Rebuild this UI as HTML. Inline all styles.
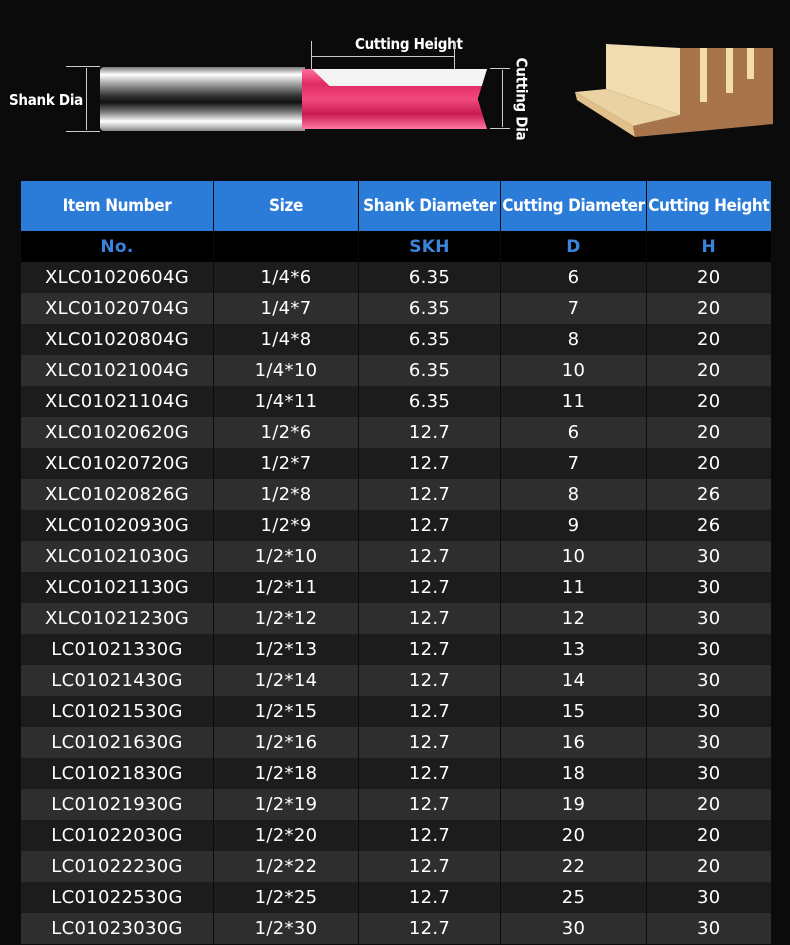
<!DOCTYPE html>
<html><head><meta charset="utf-8"><style>
body{margin:0;width:790px;height:945px;background:#0b0b0b;overflow:hidden;font-family:"Liberation Sans","DejaVu Sans",sans-serif;position:relative}
.lbl{position:absolute;color:#fff;font-size:15px;font-weight:bold;font-family:"DejaVu Sans Condensed","Liberation Sans Narrow",sans-serif;letter-spacing:-0.3px}
table{position:absolute;left:20px;top:181px;border-collapse:collapse;width:750px;table-layout:fixed}
td{text-align:center;color:#fff;font-size:18px;height:31px;padding:0;border-left:1px solid #0b0b0b;font-family:"DejaVu Sans","Liberation Sans",sans-serif;letter-spacing:0.3px;white-space:nowrap;overflow:hidden}
tr.h td{background:#2b7bd9;height:50px;font-size:17px;font-weight:bold;font-family:"DejaVu Sans Condensed","Liberation Sans",sans-serif;letter-spacing:-0.4px}
tr.s td{background:#000;color:#3a84dc;font-weight:bold;font-size:17px}
tr:nth-child(even):not(.s) td{background:#2e2e2e}
tr:nth-child(odd):not(.h) td{background:#1c1c1c}
</style></head><body>
<div class="lbl" style="left:9px;top:91px">Shank Dia</div>
<div style="position:absolute;left:66px;top:66px;width:34px;height:1px;background:#ccc"></div>
<div style="position:absolute;left:66px;top:131px;width:34px;height:1px;background:#ccc"></div>
<div style="position:absolute;left:86px;top:68px;width:1px;height:62px;background:#ccc"></div>
<div style="position:absolute;left:100px;top:67px;width:205px;height:64px;border-radius:4px 0 0 4px;background:linear-gradient(#777 0%,#fff 12%,#aaa 25%,#333 45%,#111 55%,#777 70%,#fff 85%,#888 100%)"></div>
<div style="position:absolute;left:302px;top:69px;width:185px;height:60px;background:linear-gradient(#ff6f9c 0%,#e02a62 25%,#f24a80 50%,#c81b52 75%,#ff7aa5 100%);clip-path:polygon(0 0,100% 0,95% 50%,100% 100%,0 100%)"></div>
<div style="position:absolute;left:312px;top:69px;width:175px;height:17px;background:#f4f4f4;clip-path:polygon(0 0,100% 0,97% 100%,10% 100%)"></div>
<div class="lbl" style="left:355px;top:35px">Cutting Height</div>
<div style="position:absolute;left:311px;top:41px;width:1px;height:28px;background:#ccc"></div>
<div style="position:absolute;left:454px;top:41px;width:1px;height:28px;background:#ccc"></div>
<div style="position:absolute;left:312px;top:56px;width:142px;height:1px;background:#ccc"></div>
<div style="position:absolute;left:490px;top:68px;width:20px;height:1px;background:#ccc"></div>
<div style="position:absolute;left:490px;top:128px;width:20px;height:1px;background:#ccc"></div>
<div style="position:absolute;left:502px;top:70px;width:1px;height:57px;background:#ccc"></div>
<div class="lbl" style="left:480px;top:90px;transform:rotate(90deg);transform-origin:center">Cutting Dia</div>
<svg style="position:absolute;left:0;top:0" width="790" height="150">
<polygon points="680,48 773,48 773,124 700,131 635,137 633,126 680,115" fill="#a8744c"/>
<polygon points="606,44 680,48 680,115 606,89" fill="#f0dcb0"/>
<polygon points="575,92 606,89 680,115 633,126" fill="#ead2a2"/>
<polygon points="575,92 633,126 635,137 577,100" fill="#e2c08c"/>
<rect x="700" y="48" width="7" height="54" fill="#f2dcaa"/>
<rect x="726" y="48" width="7" height="45" fill="#f2dcaa"/>
<rect x="747" y="48" width="7" height="31" fill="#f2dcaa"/>
</svg>
<table>
<colgroup><col style="width:193px"><col style="width:145px"><col style="width:142px"><col style="width:146px"><col style="width:124px"></colgroup>
<tr class="h"><td>Item Number</td><td>Size</td><td>Shank Diameter</td><td>Cutting Diameter</td><td>Cutting Height</td></tr>
<tr class="s"><td>No.</td><td></td><td>SKH</td><td>D</td><td>H</td></tr>
<tr><td>XLC01020604G</td><td>1/4*6</td><td>6.35</td><td>6</td><td>20</td></tr>
<tr><td>XLC01020704G</td><td>1/4*7</td><td>6.35</td><td>7</td><td>20</td></tr>
<tr><td>XLC01020804G</td><td>1/4*8</td><td>6.35</td><td>8</td><td>20</td></tr>
<tr><td>XLC01021004G</td><td>1/4*10</td><td>6.35</td><td>10</td><td>20</td></tr>
<tr><td>XLC01021104G</td><td>1/4*11</td><td>6.35</td><td>11</td><td>20</td></tr>
<tr><td>XLC01020620G</td><td>1/2*6</td><td>12.7</td><td>6</td><td>20</td></tr>
<tr><td>XLC01020720G</td><td>1/2*7</td><td>12.7</td><td>7</td><td>20</td></tr>
<tr><td>XLC01020826G</td><td>1/2*8</td><td>12.7</td><td>8</td><td>26</td></tr>
<tr><td>XLC01020930G</td><td>1/2*9</td><td>12.7</td><td>9</td><td>26</td></tr>
<tr><td>XLC01021030G</td><td>1/2*10</td><td>12.7</td><td>10</td><td>30</td></tr>
<tr><td>XLC01021130G</td><td>1/2*11</td><td>12.7</td><td>11</td><td>30</td></tr>
<tr><td>XLC01021230G</td><td>1/2*12</td><td>12.7</td><td>12</td><td>30</td></tr>
<tr><td>LC01021330G</td><td>1/2*13</td><td>12.7</td><td>13</td><td>30</td></tr>
<tr><td>LC01021430G</td><td>1/2*14</td><td>12.7</td><td>14</td><td>30</td></tr>
<tr><td>LC01021530G</td><td>1/2*15</td><td>12.7</td><td>15</td><td>30</td></tr>
<tr><td>LC01021630G</td><td>1/2*16</td><td>12.7</td><td>16</td><td>30</td></tr>
<tr><td>LC01021830G</td><td>1/2*18</td><td>12.7</td><td>18</td><td>30</td></tr>
<tr><td>LC01021930G</td><td>1/2*19</td><td>12.7</td><td>19</td><td>20</td></tr>
<tr><td>LC01022030G</td><td>1/2*20</td><td>12.7</td><td>20</td><td>20</td></tr>
<tr><td>LC01022230G</td><td>1/2*22</td><td>12.7</td><td>22</td><td>20</td></tr>
<tr><td>LC01022530G</td><td>1/2*25</td><td>12.7</td><td>25</td><td>30</td></tr>
<tr><td>LC01023030G</td><td>1/2*30</td><td>12.7</td><td>30</td><td>30</td></tr>
</table>
</body></html>
